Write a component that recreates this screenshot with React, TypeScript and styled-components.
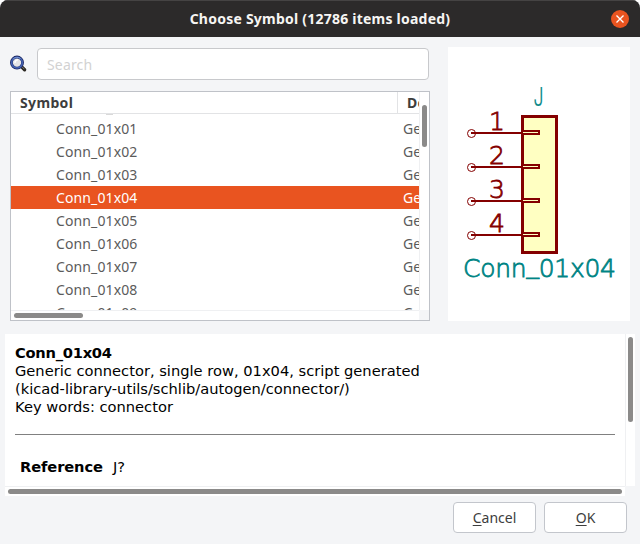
import React from "react";
import styled, { createGlobalStyle } from "styled-components";

const GlobalStyle = createGlobalStyle`
  * { box-sizing: border-box; }
  html, body { margin: 0; padding: 0; background: #fff; overflow: hidden; }
  button { margin: 0; }
`;

const uiFont = `"Noto Sans", "Open Sans", sans-serif`;

const Dialog = styled.div`
  width: 640px;
  height: 544px;
  display: flex;
  flex-direction: column;
  background: #f4f5f7;
  border-radius: 8px 8px 0 0;
  overflow: hidden;
  font-family: ${uiFont};
  font-size: 14px;
  color: #3d3d3d;
`;

const TitleBar = styled.header`
  flex: none;
  height: 37px;
  display: grid;
  grid-template-columns: 40px 1fr 40px;
  align-items: center;
  background: #2c2a2a;
  box-shadow: inset 0 1px 0 #454343;
`;

const Title = styled.h1`
  grid-column: 2;
  margin: 0;
  text-align: center;
  font-size: 14px;
  font-weight: 700;
  line-height: 20px;
  letter-spacing: 0.23px;
  color: #f6f5f3;
  white-space: nowrap;
`;

const CloseButton = styled.button`
  width: 18px;
  height: 18px;
  margin-left: 11px;
  padding: 0;
  border: 0;
  border-radius: 50%;
  background: #e95420;
  svg { display: block; }
`;

const Upper = styled.div`
  flex: none;
  height: 284px;
  display: grid;
  grid-template-columns: 420px 182px;
  column-gap: 18px;
  padding: 10px 10px 0 10px;
`;

const Browser = styled.div`
  display: flex;
  flex-direction: column;
  gap: 11px;
  padding-top: 1px;
`;

const SearchRow = styled.div`
  display: flex;
  align-items: center;
  gap: 9px;
  width: 419px;
  height: 32px;
  svg { flex: none; }
`;

const SearchInput = styled.input`
  flex: 1;
  min-width: 0;
  height: 32px;
  padding: 0 9px;
  border: 1px solid #c8c9cc;
  border-radius: 4px;
  background: #fff;
  font: 400 14px ${uiFont};
  letter-spacing: 0.15px;
  outline: none;
  &::placeholder { color: #d2d2d2; opacity: 1; }
`;

const Tree = styled.div`
  height: 230px;
  display: grid;
  grid-template-columns: 408px 10px;
  grid-template-rows: 218px 10px;
  border: 1px solid #bfc2c8;
  background: #fff;
`;

const TreeView = styled.div`
  display: flex;
  flex-direction: column;
  overflow: hidden;
`;

const TreeHeader = styled.div`
  flex: none;
  height: 22px;
  display: grid;
  grid-template-columns: 386px 22px;
  border-bottom: 1px solid #e2e3e5;
  font-weight: 700;
  line-height: 21px;
  letter-spacing: 0.35px;
`;

const HeaderCell = styled.div`
  padding-left: 9px;
  overflow: hidden;
  white-space: nowrap;
  & + & { border-left: 1px solid #e2e3e5; }
`;

const TreeRows = styled.div`
  flex: 1;
  min-height: 0;
  overflow: hidden;
`;

const ScrolledRowEdge = styled.div`
  width: 7px;
  height: 1px;
  margin: 0 0 2px 95px;
  background: #d9d9d9;
`;

const TreeRow = styled.div<{ $selected?: boolean }>`
  height: 23px;
  display: grid;
  grid-template-columns: 392px 16px;
  line-height: 23px;
  background: ${(p) => (p.$selected ? "#e95420" : "#fff")};
  color: ${(p) => (p.$selected ? "#fff" : "#5b5b5b")};
`;

const SymbolName = styled.span`
  padding-left: 45px;
  letter-spacing: 0.12px;
`;

const Description = styled.span`
  overflow: hidden;
  white-space: nowrap;
`;

const ScrollTrack = styled.div<{ $vertical?: boolean }>`
  background: #fff;
  border: 0 solid #eff0f2;
  border-width: ${(p) => (p.$vertical ? "0 0 0 1px" : "1px 0 0 0")};
`;

const ScrollThumb = styled.div<{ $w: number; $h: number; $top: number; $left: number }>`
  width: ${(p) => p.$w}px;
  height: ${(p) => p.$h}px;
  margin: ${(p) => p.$top}px 0 0 ${(p) => p.$left}px;
  border-radius: 3px;
  background: #8b8a89;
`;

const ScrollCorner = styled.div`
  background: #f4f5f7;
`;

const Preview = styled.div`
  height: 274px;
  background: #fff;
  svg { display: block; }
`;

const Details = styled.section`
  flex: none;
  height: 162px;
  margin: 13px 5px 0;
  display: grid;
  grid-template-columns: 620px 10px;
  grid-template-rows: 152px 10px;
`;

const DetailsBody = styled.div`
  padding: 10px;
  background: #fff;
  color: #000;
  font: 14.66px/18px "DejaVu Sans", sans-serif;
  overflow: hidden;
`;

const DetailLine = styled.div<{ $strong?: boolean }>`
  font-weight: ${(p) => (p.$strong ? 700 : 400)};
  letter-spacing: ${(p) => (p.$strong ? "-0.25px" : "0")};
  white-space: nowrap;
`;

const Rule = styled.hr`
  height: 1px;
  margin: 18px 0 23px;
  border: 0;
  background: #808080;
`;

const Field = styled.div`
  display: flex;
  gap: 10px;
  padding-left: 5px;
`;

const FieldName = styled.span`
  font-weight: 700;
  letter-spacing: -0.1px;
`;

const Actions = styled.footer`
  display: flex;
  gap: 8px;
  justify-content: flex-end;
  padding: 6px 13px 0 0;
`;

const ActionButton = styled.button`
  width: 83px;
  height: 31px;
  padding: 0;
  border: 1px solid #c3c6cc;
  border-radius: 4px;
  background: #fff;
  color: #3d3d3d;
  font: 400 14px ${uiFont};
  u { text-underline-offset: 2px; text-decoration-skip-ink: none; }
`;

const symbols = ["01", "02", "03", "04", "05", "06", "07", "08", "09"].map((n) => `Conn_01x${n}`);
const selectedSymbol = "Conn_01x04";
const pins = [133, 167, 201, 235];

function SearchIcon() {
  return (
    <svg width="18" height="18" viewBox="0 0 18 18" aria-hidden="true">
      <path d="M11.2 11.4 14.6 14.7" stroke="#292620" strokeWidth="3.4" strokeLinecap="round" />
      <path d="M12.2 12 14.2 14" stroke="#827d70" strokeWidth="1" strokeLinecap="round" />
      <circle cx="7" cy="7.6" r="5.6" fill="#e4e4e6" stroke="#202b66" strokeWidth="2.8" />
      <circle cx="7" cy="7.6" r="5.4" fill="none" stroke="#4362b2" strokeWidth="1.6" />
      <path d="M3 4.3A5.4 5.4 0 0 1 10.5 3.5" fill="none" stroke="#7796d6" strokeWidth="1" />
      <path d="M5 8A3 3 0 0 1 8 4.8" fill="none" stroke="#fff" strokeWidth="1.5" />
    </svg>
  );
}

function SymbolDrawing() {
  return (
    <svg width="182" height="274" viewBox="448 47 182 274">
      <rect x="522.5" y="116.5" width="34" height="136" fill="#ffffc2" stroke="#840000" strokeWidth="3" />
      {pins.map((y, i) => (
        <g key={y}>
          <path d={`M471 ${y}H522`} stroke="#840000" strokeWidth="2" />
          <circle cx="471.5" cy={y + 0.5} r="4" fill="none" stroke="#840000" strokeWidth="1" />
          <rect x="522" y={y - 2} width="17" height="3" fill="#ffffc2" stroke="#840000" strokeWidth="1.6" shapeRendering="crispEdges" />
          <text
            x="497"
            y={y - 3.5}
            textAnchor="middle"
            fill="#840000"
            fontFamily="DejaVu Sans"
            fontWeight="200"
            fontSize="25"
            stroke="#840000"
            strokeWidth="0.8"
          >
            {i + 1}
          </text>
        </g>
      ))}
      <g fill="#008484" stroke="#008484" strokeWidth="0.8" fontFamily="DejaVu Sans" fontWeight="200" fontSize="25">
        <text x="533.5" y="106.3" fontFamily="Inter" fontWeight="300" fontSize="25" strokeWidth="0.2" textLength="10" lengthAdjust="spacingAndGlyphs">J</text>
        <text x="463" y="277" textLength="153" lengthAdjust="spacing">
          Conn<tspan dy="-4.5">_</tspan><tspan dy="4.5">01x04</tspan>
        </text>
      </g>
    </svg>
  );
}

export default function App() {
  return (
    <>
      <GlobalStyle />
      <Dialog>
        <TitleBar>
          <Title>Choose Symbol (12786 items loaded)</Title>
          <CloseButton aria-label="Close">
            <svg width="18" height="18" viewBox="0 0 18 18">
              <path d="M5.5 5.5 12.5 12.5M12.5 5.5 5.5 12.5" stroke="#fff" strokeWidth="1.4" />
            </svg>
          </CloseButton>
        </TitleBar>
        <Upper>
          <Browser>
            <SearchRow>
              <SearchIcon />
              <SearchInput placeholder="Search" />
            </SearchRow>
            <Tree>
              <TreeView>
                <TreeHeader>
                  <HeaderCell>Symbol</HeaderCell>
                  <HeaderCell>Description</HeaderCell>
                </TreeHeader>
                <TreeRows>
                  <ScrolledRowEdge />
                  {symbols.map((name) => (
                    <TreeRow key={name} $selected={name === selectedSymbol}>
                      <SymbolName>{name}</SymbolName>
                      <Description>Generic</Description>
                    </TreeRow>
                  ))}
                </TreeRows>
              </TreeView>
              <ScrollTrack $vertical>
                <ScrollThumb $w={5} $h={42} $top={13} $left={2} />
              </ScrollTrack>
              <ScrollTrack>
                <ScrollThumb $w={69} $h={5} $top={2} $left={3} />
              </ScrollTrack>
              <ScrollCorner />
            </Tree>
          </Browser>
          <Preview>
            <SymbolDrawing />
          </Preview>
        </Upper>
        <Details>
          <DetailsBody>
            <DetailLine $strong>{selectedSymbol}</DetailLine>
            <DetailLine>Generic connector, single row, 01x04, script generated</DetailLine>
            <DetailLine>(kicad-library-utils/schlib/autogen/connector/)</DetailLine>
            <DetailLine>Key words: connector</DetailLine>
            <Rule />
            <Field>
              <FieldName>Reference</FieldName>
              <span>J?</span>
            </Field>
          </DetailsBody>
          <ScrollTrack $vertical>
            <ScrollThumb $w={5} $h={85} $top={3} $left={2} />
          </ScrollTrack>
          <ScrollTrack>
            <ScrollThumb $w={614} $h={5} $top={2} $left={3} />
          </ScrollTrack>
        </Details>
        <Actions>
          <ActionButton><u>C</u>ancel</ActionButton>
          <ActionButton><u>O</u>K</ActionButton>
        </Actions>
      </Dialog>
    </>
  );
}
